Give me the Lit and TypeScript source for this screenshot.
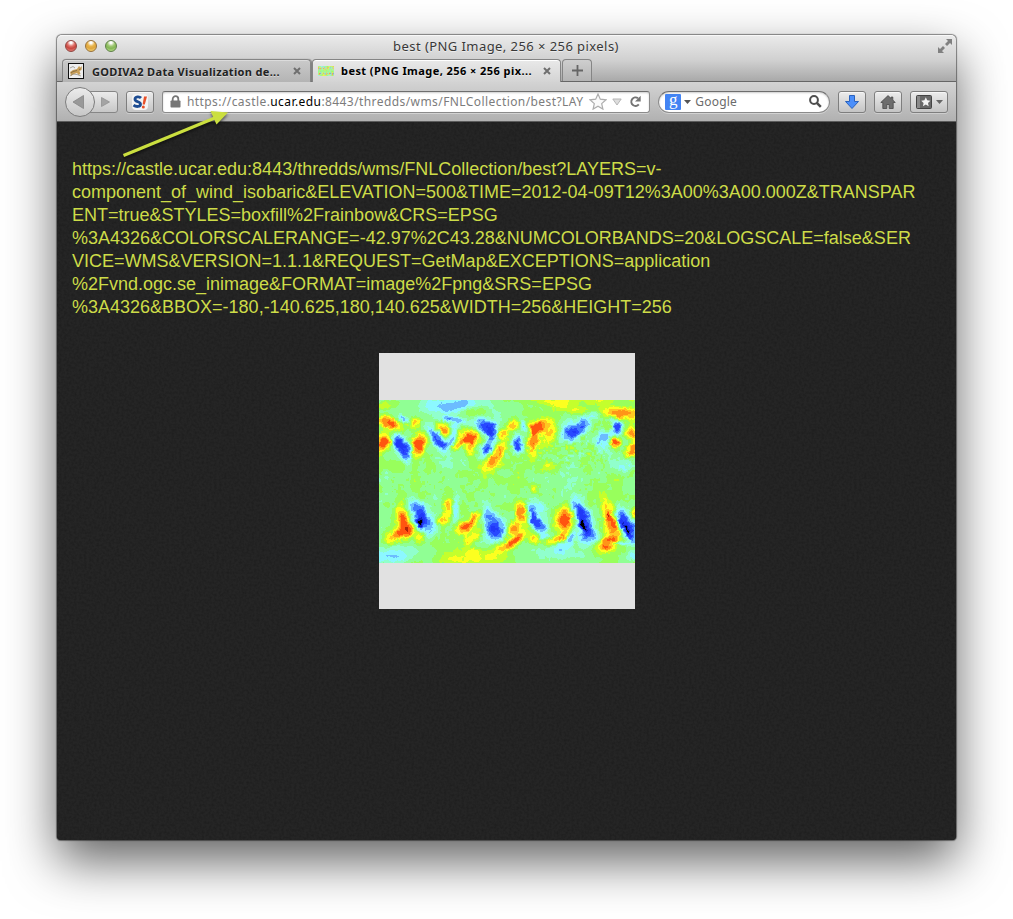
import { LitElement, html, svg, css } from "lit";
import { customElement } from "lit/decorators.js";

/* ---------- wind field ---------- */

const MAP_W = 256;
const MAP_H = 163;

const PALETTE = [
  "#000000", "#1020c0", "#2038f8", "#2848ff", "#407cff", "#6cbcff", "#8cf8ff", "#90ffcc",
  "#90ff94", "#98ff5c", "#c4ff2c", "#fcff20", "#ffc820", "#ff9418", "#ff5410", "#b02408", "#000000",
];

// centre x, centre y, radius along axis, radius across, axis angle, strength
type Blob = [number, number, number, number, number, number];
const BLOBS: Blob[] = [
  [4, 5, 14, 4, 0, 2], [10, 23, 13, 6, 25, 5.8], [3, 42, 10, 6, -60, 5.8], [73, 5, 30, 6, -6, -2.0],
  [80, 8, 48, 12, 0, -1.4], [24, 19, 5, 3, 50, -3], [36, 23, 7, 5, -20, 4.4], [24, 47, 14, 6.5, 68, -6.2],
  [16, 43, 4, 7, 0, -3.4], [39, 45, 13, 6.5, -75, 6], [48, 34, 4, 9, 0, 1.6], [54, 35, 16, 5.5, 50, -4.2],
  [73, 35, 10, 4.5, -70, -3.8], [63, 43, 6, 5, 0, -2], [63, 29, 10, 6, 60, 4.4], [74, 20, 14, 3, 12, -2.8],
  [93, 12, 13, 5, 0, 2], [90, 37, 9, 8, 0, 5.6], [91, 48, 5, 9, 0, 3.6], [79, 44, 7, 4, -30, 4],
  [108, 28, 12, 7, 45, -5.6], [112, 35, 5, 7, 0, -2.4], [107, 50, 10, 5, -60, -4.8], [122, 33, 6, 5, 0, 4],
  [117, 55, 14, 5.5, -55, 4.4], [113, 65, 14, 8, 0, 1.8], [133, 26, 7, 5, 0, 3.6], [138, 44, 6, 9, 0, -5.8],
  [145, 27, 3, 7, -20, -3.6], [154, 40, 5.5, 16, 8, 5], [160, 25, 13, 6, -25, 4], [170, 32, 8, 10, 0, 2.8],
  [197, 29, 15, 9, -35, -4.6], [205, 23, 6, 6, 0, -1.5], [191, 33, 10, 7, 0, -1], [214, 14, 8, 4, 0, -2.6],
  [243, 13, 19, 6, 8, 4.6], [186, 7, 28, 5, 12, 2.3], [205, 0, 60, 4, 0, 1.9], [237, 27, 5, 7, 0, -4.6],
  [224, 42, 8, 11, 10, -3.6], [229, 39, 3, 7, 0, -1.5], [235, 42, 6, 5, 0, 5.8], [253, 33, 6, 6, 0, 4],
  [254, 47, 9, 5, -50, 5.6], [247, 65, 7, 7, 0, -2.4], [229, 27, 4, 5, 0, 2],
  [24, 118, 7, 14, 0, 4.8], [31, 126, 9, 8, 30, 1.8], [18, 136, 15, 5.5, -30, 4], [22, 127, 17, 18, 0, 1.2],
  [40, 138, 5, 8, 0, 2.6], [38, 112, 16, 8, 60, -4.7], [46, 123, 10, 10, 0, -2.8], [40.5, 124, 2.500, 5, 0, -5],
  [68, 107, 5, 12, 10, 4], [62, 120, 7, 5, 0, 3.6], [76, 107, 3, 11, 0, -3.2], [84, 127, 9, 6, -20, 4.8],
  [96, 117, 11, 5, -50, 4.4], [97, 133, 4, 10, 30, 2.2], [88, 139, 4, 8, 0, 2], [112, 119, 16, 9, 62, -4.9],
  [116, 134, 10, 9, 0, -3], [94, 158, 36, 9, 0, 2.9], [93, 151, 8, 3, 0, 1.7], [126, 145, 14, 5, -25, 2.6],
  [6, 158, 22, 5, 0, -1.3], [14, 150, 32, 11, 0, -1.6], [144, 113, 6, 11, -25, 5.4], [134, 127, 9, 6, -55, 4.6],
  [140, 136, 11, 5, -45, 3.6], [131, 144, 12, 5, -35, 1.8], [151, 114, 6, 10, -20, -5], [159, 110, 8, 12, -15, -2.7],
  [161, 126, 10, 5, 40, -4.4], [155, 138, 7, 5, 0, 3.8], [187, 116, 16, 8.5, -80, 5], [183, 124, 11, 11, 0, 1],
  [178, 138, 11, 3.500, -20, 3.6], [202, 116, 19, 7.5, 60, -5.8], [204.5, 125, 6, 2.500, 60, -4.8], [209, 136, 11, 9, 0, -3.4],
  [200, 107, 6, 7, 0, -1.2], [191, 137, 4, 8, 20, -3.8], [231, 119, 19, 8, 80, 5], [236, 127, 10, 3, 70, 1.6],
  [229, 143, 10, 5.5, -25, 4.2], [225, 149, 18, 9, 0, 2.2], [230, 115, 1.5, 3, 0, 3], [246, 123, 19, 7.5, 58, -5.5],
  [247, 130, 10, 2.500, 58, -4.6], [253, 127, 6, 6, 0, -1.2], [180, 148, 9, 6, 0, -2], [254, 156, 9, 4, 0, -2.4],
  [190, 152, 60, 9, 0, -1.2], [166, 137, 7, 3, 0, -2.5], [240, 143, 12, 2, 0, -3], [255, 113, 3, 6, 0, 3.5],
  [193, 82, 10, 12, 0, -0.8], [155, 88, 4, 6, 0, 2], [166, 66, 12, 6, 0, 1.9], [65, 50, 14, 16, 0, -0.9],
];

function hash(x: number, y: number, seed: number): number {
  let h = (x * 374761393 + y * 668265263 + seed * 1274126177) | 0;
  h = Math.imul(h ^ (h >>> 13), 1274126177);
  return ((h ^ (h >>> 16)) >>> 0) / 4294967295;
}

function noise(x: number, y: number, seed: number): number {
  const xi = Math.floor(x), yi = Math.floor(y);
  const fx = x - xi, fy = y - yi;
  const u = fx * fx * (3 - 2 * fx), v = fy * fy * (3 - 2 * fy);
  const top = hash(xi, yi, seed) * (1 - u) + hash(xi + 1, yi, seed) * u;
  const bottom = hash(xi, yi + 1, seed) * (1 - u) + hash(xi + 1, yi + 1, seed) * u;
  return (top * (1 - v) + bottom * v) * 2 - 1;
}

function fieldBand(px: number, py: number): number {
  const x = px + noise(px / 6, py / 6, 1) * 1.6 + noise(px / 2, py / 2, 2) * 1.1;
  const y = py + noise(px / 6, py / 6, 3) * 1.6 + noise(px / 2, py / 2, 4) * 1.1;
  const calm = py < 18 || py > 142 ? 0.3 : 1;
  const rough = Math.exp(-(((px - 195) / 45) ** 2) - ((py - 52) / 16) ** 2);
  let v = 8.85
    + noise(px / 17, py / 11, 5) * 0.6
    + noise(px / 7, py / 8, 6) * 0.75 * calm
    + noise(px / 2.2, py / 2.4, 7) * (0.36 + rough * 0.9) * calm;
  for (const [cx, cy, rx, ry, deg, amp] of BLOBS) {
    const dx = x - cx, dy = y - cy;
    if (Math.abs(dx) > 140 || Math.abs(dy) > 45) continue;
    const a = (deg * Math.PI) / 180;
    const along = (dx * Math.cos(a) + dy * Math.sin(a)) / rx;
    const across = (dy * Math.cos(a) - dx * Math.sin(a)) / ry;
    v += amp * Math.exp(-Math.pow(along * along + across * across, 1.2) * 0.95);
  }
  if (v > 14.3) v = 14.3 + (v - 14.3) * 0.4;
  if (v < 3) v = 3 + (v - 3) * 0.65;
  return Math.max(0, Math.min(PALETTE.length - 1, Math.floor(v)));
}

function bandPaths(): string[] {
  const out = PALETTE.map(() => "");
  for (let y = 0; y < MAP_H; y++) {
    let start = 0;
    let band = fieldBand(0, y);
    for (let x = 1; x <= MAP_W; x++) {
      const next = x < MAP_W ? fieldBand(x, y) : -1;
      if (next !== band) {
        out[band] += `M${start} ${y}h${x - start}v1h${start - x}z`;
        start = x;
        band = next;
      }
    }
  }
  return out;
}

const BANDS = bandPaths();
const mapShapes = () => BANDS.map((d, i) => svg`<path d=${d} fill=${PALETTE[i]}></path>`);

@customElement("wind-map")
export class WindMap extends LitElement {
  static styles = css`
    :host { display: block; width: 256px; height: 209px; padding-top: 47px; background: #e1e1e1; }
    svg { display: block; }
  `;
  render() {
    return html`<svg width="256" height="163" viewBox="0 0 256 163" shape-rendering="crispEdges">${mapShapes()}</svg>`;
  }
}

/* ---------- browser chrome ---------- */

@customElement("browser-tab")
export class BrowserTab extends LitElement {
  static properties = { label: {}, active: { type: Boolean, reflect: true } };
  declare label: string;
  declare active: boolean;
  static styles = css`
    :host {
      display: flex; align-items: center; box-sizing: border-box; width: 249px; height: 23px;
      padding: 0 9px 0 5px; border: 1px solid #858585; border-bottom: 0; border-radius: 4px 4px 0 0;
      background: linear-gradient(#cacaca, #b4b4b4); box-shadow: inset 0 1px #dcdcdc, 1px 0 1px #7b7b7b;
      font: bold 11px "Noto Sans", "Open Sans", sans-serif; color: #222; text-shadow: 0 1px #ffffff70;
    }
    :host([active]) { background: linear-gradient(#e9e9e9, #d3d3d3); color: #000; height: 24px; box-shadow: inset 0 1px #fff; padding-bottom: 2px; }
    .label { flex: 1; margin-left: var(--gap, 8px); white-space: nowrap; letter-spacing: var(--track, 0); }
    .close { width: 8px; height: 8px; }
  `;
  render() {
    return html`<slot></slot><span class="label">${this.label}</span>
      <svg class="close" viewBox="0 0 8 8"><path d="M1 1l6 6M7 1L1 7" stroke="#6f6f6f" stroke-width="2"></path></svg>`;
  }
}

const URL_LINES = [
  "https://castle.ucar.edu:8443/thredds/wms/FNLCollection/best?LAYERS=v-",
  "component_of_wind_isobaric&ELEVATION=500&TIME=2012-04-09T12%3A00%3A00.000Z&TRANSPAR",
  "ENT=true&STYLES=boxfill%2Frainbow&CRS=EPSG",
  "%3A4326&COLORSCALERANGE=-42.97%2C43.28&NUMCOLORBANDS=20&LOGSCALE=false&SER",
  "VICE=WMS&VERSION=1.1.1&REQUEST=GetMap&EXCEPTIONS=application",
  "%2Fvnd.ogc.se_inimage&FORMAT=image%2Fpng&SRS=EPSG",
  "%3A4326&BBOX=-180,-140.625,180,140.625&WIDTH=256&HEIGHT=256",
];

@customElement("app-root")
export class AppRoot extends LitElement {
  static styles = css`
    :host { display: block; box-sizing: border-box; width: 1013px; height: 919px; padding: 35px 57px 79px; background: #fff; overflow: hidden; font-family: "Noto Sans", "Open Sans", sans-serif; }
    svg { display: block; flex: none; }
    .window { position: relative; width: 899px; height: 805px; border-radius: 5px 5px 4px 4px; display: flex; flex-direction: column;
      box-shadow: 0 0 1px 0.5px #00000070, 0 21px 50px rgba(0,0,0,.62); background: #232323; }
    .top { display: flex; flex-direction: column; height: 46px; border-radius: 5px 5px 0 0; border-bottom: 1px solid #666;
      background: linear-gradient(#ebebeb, #d0d0d0 55%, #a9a9a9); box-shadow: inset 0 1px #f8f8f8; }
    .titlebar { display: flex; align-items: center; box-sizing: border-box; height: 24px; padding: 0 4px 2px 8px; }
    .lights { display: flex; gap: 8px; width: 140px; }
    .light { box-sizing: border-box; width: 12px; height: 12px; border-radius: 50%; border: 1px solid #0000; }
    .red { background: radial-gradient(circle at 50% 15%, #fff 0 10%, #e0726a 38%, #c8463f 60%, #ef958c); border-color: #8f4440; }
    .yellow { background: radial-gradient(circle at 50% 15%, #fff 0 10%, #e9b54c 38%, #dfa53c 60%, #fbe58a); border-color: #97703a; }
    .green { background: radial-gradient(circle at 50% 15%, #fff 0 10%, #a0c873 38%, #83b754 60%, #cdec9c); border-color: #5d7f47; }
    .title { flex: 1; text-align: center; font-size: 13px; line-height: 18px; color: #383838; text-shadow: 0 1px #ffffff80; white-space: nowrap; letter-spacing: .43px; padding-right: 5px; }
    .end { display: flex; width: 140px; justify-content: flex-end; }
    .tabs { display: flex; height: 22px; padding-left: 5px; gap: 1px; }
    .tab1 { --track: 0.33px; }
    .tab2 { --track: 0.44px; --gap: 7px; }
    .fav { box-sizing: border-box; width: 16px; height: 16px; border: 1px solid #111; background: #eee; }
    .mini { width: 16px; height: 10px; }
    .plus { display: flex; align-items: center; justify-content: center; box-sizing: border-box; width: 30px; height: 22px;
      border: 1px solid #858585; border-bottom: 0; border-radius: 4px 4px 0 0; background: linear-gradient(#cfcfcf, #b4b4b4); }
    .toolbar { display: flex; align-items: center; box-sizing: border-box; height: 40px; padding: 0 8px 0 8px; border-bottom: 1px solid #5c5c5c;
      background: linear-gradient(#d3d3d3, #b1b1b1); }
    .btn { display: flex; align-items: center; justify-content: center; box-sizing: border-box; width: 28px; height: 22px; border: 1px solid #7e7e7e;
      border-radius: 3px; background: linear-gradient(#ececec, #c4c4c4); box-shadow: inset 0 1px #f6f6f6, 0 1px #ffffff50; }
    .nav { margin-right: 7px; }
    .addr { display: flex; align-items: center; box-sizing: border-box; width: 489px; height: 22px; margin-left: 8px; padding: 0 7px; border: 1px solid #8b8b8b; border-top-color: #6e6e6e;
      border-radius: 3px; background: #fff; box-shadow: inset 0 1px 2px #0003, 0 1px #ffffff60; }
    .url { width: 399px; margin-left: 6px; overflow: hidden; white-space: nowrap; font-size: 12px; line-height: 18px; padding-top: 1px; color: #7c7c7c; letter-spacing: 0.42px; }
    .host { color: #000; }
    .star { margin: 0 5px 0 3px; }
    .reload { margin-left: 7px; }
    .search { display: flex; align-items: center; box-sizing: border-box; width: 172px; height: 22px; margin-left: 8px; padding: 0 7px 0 6px; border: 1px solid #8b8b8b; border-top-color: #6e6e6e;
      border-radius: 11px; background: #fff; box-shadow: inset 0 1px 2px #0003, 0 1px #ffffff60; }
    .g { box-sizing: border-box; width: 16px; height: 16px; border-radius: 1px; background: #4384f3; color: #fff; text-align: center; font: 17px/11px "Liberation Serif", serif; }
    .caret { margin: 0 4px 0 3px; }
    .hint { flex: 1; font-size: 12px; line-height: 18px; padding-top: 1px; color: #6b6b6b; letter-spacing: 0.2px; }
    .down { margin-left: 8px; }
    .home { margin-left: 8px; }
    .marks { width: 38px; margin-left: 8px; gap: 4px; }
    .s { width: 16px; height: 16px; }
    .page { position: relative; flex: 1; display: flex; flex-direction: column; padding: 36px 15px 0; background: #252525; border-radius: 0 0 4px 4px; overflow: hidden; }
    .grain { position: absolute; inset: 0; width: 100%; height: 100%; pointer-events: none; }
    .text { position: relative; z-index: 1; color: #cddc48; font: 18px/23px "Liberation Sans", Arial, sans-serif; white-space: nowrap; }
    .line { height: 23px; }
    .map { position: relative; z-index: 1; align-self: center; margin-top: 34px; }
    .arrow { position: absolute; left: 60px; top: 70px; }
    .shaft { filter: drop-shadow(0 2px 1.5px #0008); }
  `;

  render() {
    return html`
      <div class="window">
        <div class="top">
          <div class="titlebar">
            <div class="lights"><i class="light red"></i><i class="light yellow"></i><i class="light green"></i></div>
            <div class="title">best (PNG Image, 256 × 256 pixels)</div>
            <div class="end">
              <svg width="14" height="14" viewBox="0 0 14 14" fill="#808080"><path d="M8 0h6v6l-2-2-3 3-2-2 3-3zM0 8l2 2 3-3 2 2-3 3 2 2H0z"></path></svg>
            </div>
          </div>
          <div class="tabs">
            <browser-tab class="tab1" label="GODIVA2 Data Visualization de...">
              <svg class="fav" viewBox="0 0 14 14"><path d="M1 8l3-2 4-1 2-3 1.500 1.500L13 2l-.5 4-2 1 1 3-2 1-1.500-2-3 1-3 2z" fill="#c99f58"></path><path d="M1 4l3-1.500L6 4M1 12l3-2 4 .5 4 1.500" fill="none" stroke="#8a857b" stroke-width=".7"></path><path d="M2 9l2-1.500 4-1M10 5.500l1.500-.5" fill="none" stroke="#5a4b35" stroke-width=".6"></path></svg>
            </browser-tab>
            <browser-tab class="tab2" active label="best (PNG Image, 256 × 256 pix...">
              <svg class="mini" viewBox="0 0 256 163" preserveAspectRatio="none">${mapShapes()}</svg>
            </browser-tab>
            <div class="plus"><svg width="11" height="11" viewBox="0 0 11 11"><path d="M5.5 0v11M0 5.5h11" stroke="#666" stroke-width="1.8"></path></svg></div>
          </div>
        </div>

        <div class="toolbar">
          <svg class="nav" width="54" height="32" viewBox="0 0 54 32">
            <defs><linearGradient id="b" x2="0" y2="1"><stop stop-color="#ececec"></stop><stop offset="1" stop-color="#c6c6c6"></stop></linearGradient></defs>
            <path d="M24 5.500h26a2.500 2.500 0 0 1 2.500 2.500v16a2.500 2.500 0 0 1-2.500 2.500H24z" fill="url(#b)" stroke="#868686"></path>
            <circle cx="15" cy="16" r="14.500" fill="url(#b)" stroke="#7c7c7c"></circle>
            <path d="M18.500 9.500v13L8 16z" fill="#999" stroke="#858585" stroke-width=".8"></path>
            <path d="M36.500 11.500v9l8-4.500z" fill="#a4a4a4" stroke="#929292" stroke-width=".8"></path>
          </svg>
          <div class="btn">
            <svg class="s" viewBox="0 0 16 16">
              <rect width="16" height="16" rx="4" fill="#f4f4f4"></rect>
              <path d="M9 4C7.500 2.300 3 2.400 3 5.200c0 3 5.500 2.200 5.500 5 0 2.800-4.500 2.900-7 .9" fill="none" stroke="#1d4c92" stroke-width="2.800"></path>
              <path d="M12 2.500h3L12.800 10.500h-2.200z" fill="#e8502a"></path><circle cx="11.300" cy="13" r="1.500" fill="#e8502a"></circle>
            </svg>
          </div>
          <div class="addr">
            <svg width="11" height="13" viewBox="0 0 11 13"><path d="M2.700 6V4a2.800 2.800 0 0 1 5.600 0v2" fill="none" stroke="#777" stroke-width="1.800"></path><rect x=".5" y="5.500" width="10" height="7" rx=".8" fill="#777"></rect></svg>
            <div class="url">https://castle.<span class="host">ucar.edu</span>:8443/thredds/wms/FNLCollection/best?LAY</div>
            <svg class="star" width="18" height="17" viewBox="0 0 18 17"><path d="M9 1l2.300 5.200 5.700.6-4.300 3.800 1.200 5.500L9 13.200l-4.900 2.900 1.200-5.500L1 6.800l5.700-.6z" fill="#fafafa" stroke="#adadad" stroke-width="1.200"></path></svg>
            <svg width="10" height="8" viewBox="0 0 10 8"><path d="M.8 1h8.400L5 7z" fill="#ddd" stroke="#b5b5b5"></path></svg>
            <svg class="reload" width="13" height="13" viewBox="0 0 13 13"><path d="M9 3.300A4.200 4.200 0 1 0 9.800 9.400" fill="none" stroke="#747474" stroke-width="2"></path><path d="M11.700 .8v5.700H6z" fill="#747474"></path></svg>
          </div>
          <div class="search">
            <div class="g">g</div>
            <svg class="caret" width="7" height="4" viewBox="0 0 7 4"><path d="M0 0h7L3.500 4z" fill="#555"></path></svg>
            <div class="hint">Google</div>
            <svg width="13" height="13" viewBox="0 0 13 13" fill="none" stroke="#4e4e4e"><circle cx="5" cy="5" r="3.900" stroke-width="2"></circle><path d="M7.800 7.800l4 4" stroke-width="2.500"></path></svg>
          </div>
          <div class="btn down"><svg width="14" height="14" viewBox="0 0 14 14"><path d="M4.500.5h5v6h4L7 13.500.5 6.500h4z" fill="#4b8ffb" stroke="#2a62bd"></path></svg></div>
          <div class="btn home"><svg width="16" height="14" viewBox="0 0 16 14"><path d="M8 .6L.8 7.500h2v6h4v-4h2.400v4h4v-6h2L12.800 5V2h-1.600v1.500z" fill="#6d6d6d" stroke="#484848" stroke-width=".8"></path></svg></div>
          <div class="btn marks">
            <svg width="16" height="14" viewBox="0 0 16 14"><rect x=".5" y=".5" width="15" height="13" rx="1" fill="#686868" stroke="#444"></rect><path d="M1 1h3v12H1z" fill="#8a8a8a"></path><path d="M9.800 2.300l1.400 3 3.200.4-2.400 2.200.7 3.300-2.900-1.700-2.900 1.700.7-3.300-2.400-2.200 3.200-.4z" fill="#f3f3f3"></path></svg>
            <svg width="7" height="4" viewBox="0 0 7 4"><path d="M0 0h7L3.500 4z" fill="#666"></path></svg>
          </div>
        </div>

        <div class="page">
          <svg class="grain">
            <filter id="n" x="0" y="0" width="100%" height="100%"><feTurbulence type="fractalNoise" baseFrequency=".4" numOctaves="2" seed="3"></feTurbulence><feColorMatrix values="0 0 0 0 0  0 0 0 0 0  0 0 0 0 0  1.6 0 0 0 -.6"></feColorMatrix></filter>
            <rect width="100%" height="100%" filter="url(#n)" opacity=".22"></rect>
          </svg>
          <div class="text">${URL_LINES.map((line) => html`<div class="line">${line}</div>`)}</div>
          <wind-map class="map"></wind-map>
        </div>

        <svg class="arrow" width="120" height="60" viewBox="117 105 120 60">
          <g class="shaft"><path d="M123.500 155.500L216 117.500" stroke="#cbdf3f" stroke-width="3"></path><path d="M228 112.500l-17.500-1.500 6 13.500z" fill="#cbdf3f"></path></g>
        </svg>
      </div>
    `;
  }
}
